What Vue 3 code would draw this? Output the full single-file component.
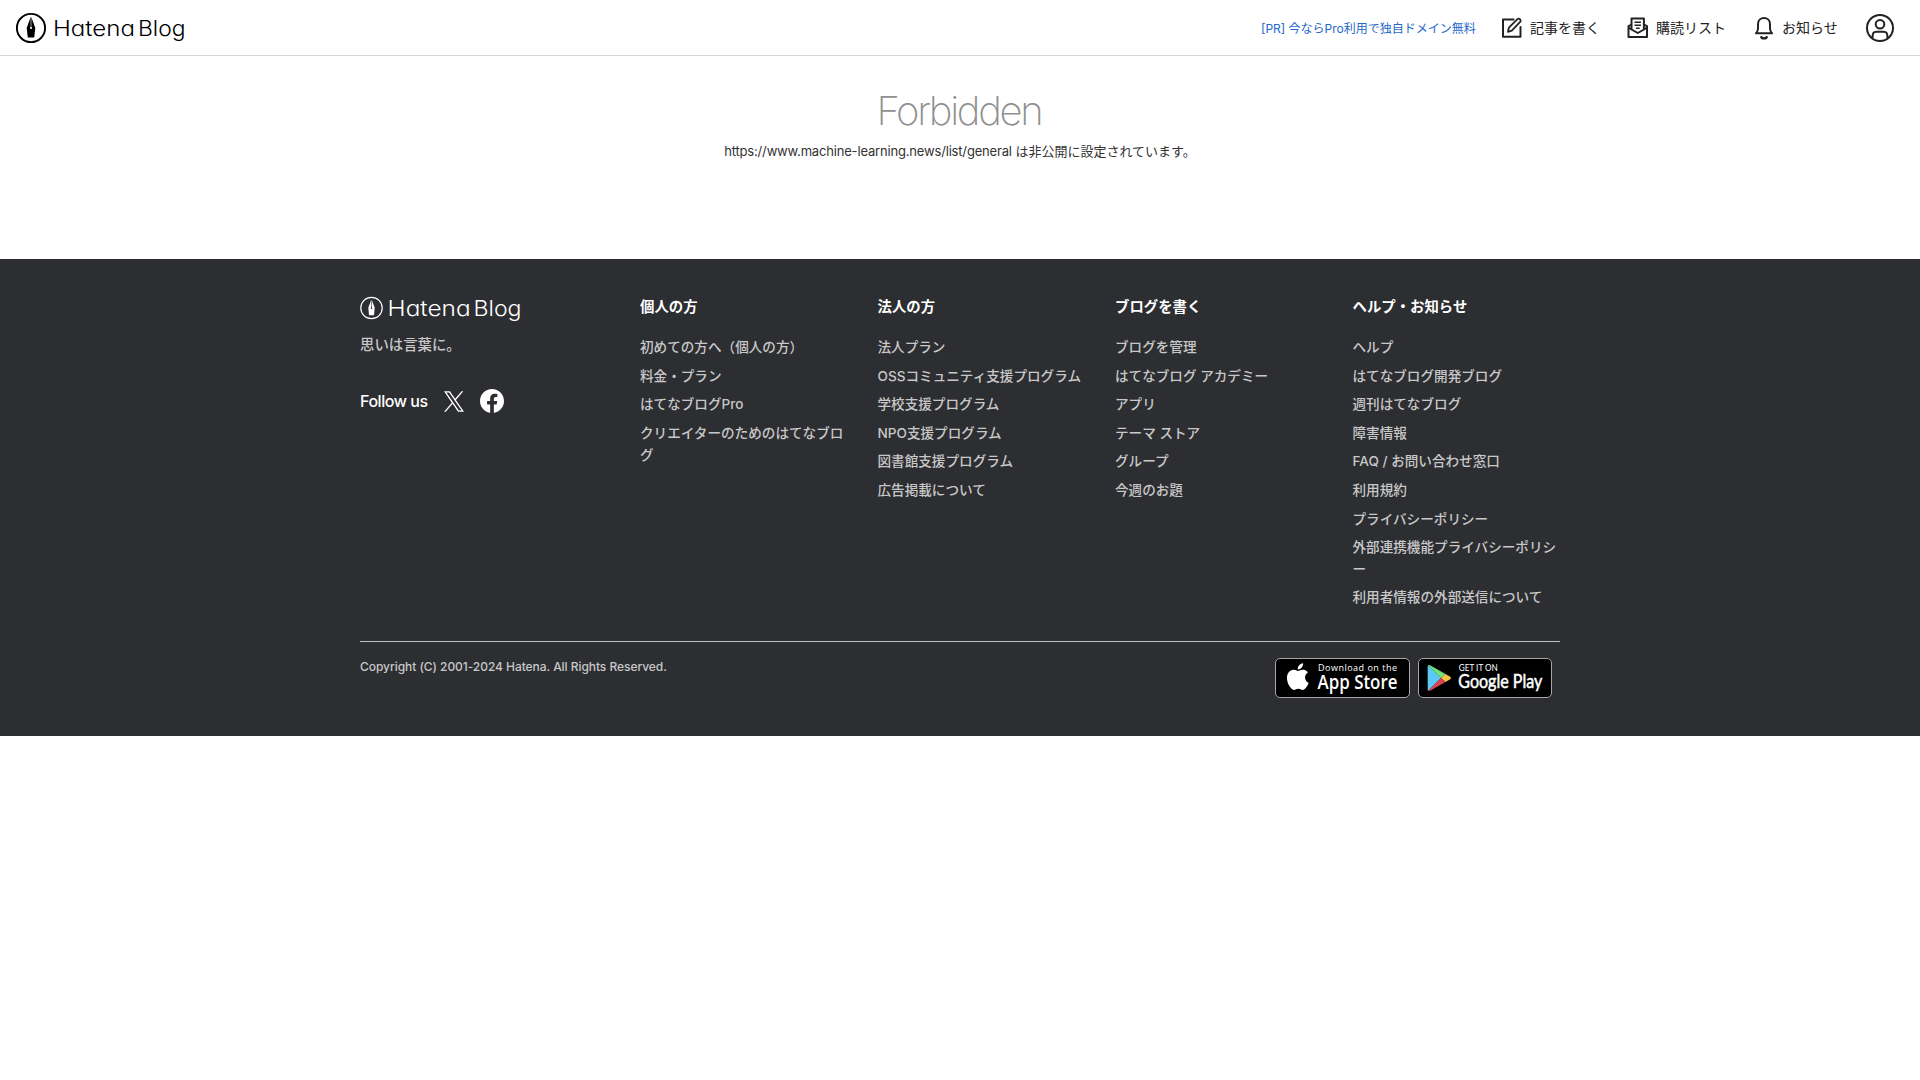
<script setup>
const columns = [
  {
    title: '個人の方',
    links: ['初めての方へ（個人の方）', '料金・プラン', 'はてなブログPro', 'クリエイターのためのはてなブログ'],
  },
  {
    title: '法人の方',
    links: [
      '法人プラン',
      'OSSコミュニティ支援プログラム',
      '学校支援プログラム',
      'NPO支援プログラム',
      '図書館支援プログラム',
      '広告掲載について',
    ],
  },
  {
    title: 'ブログを書く',
    links: ['ブログを管理', 'はてなブログ アカデミー', 'アプリ', 'テーマ ストア', 'グループ', '今週のお題'],
  },
  {
    title: 'ヘルプ・お知らせ',
    links: [
      'ヘルプ',
      'はてなブログ開発ブログ',
      '週刊はてなブログ',
      '障害情報',
      'FAQ / お問い合わせ窓口',
      '利用規約',
      'プライバシーポリシー',
      '外部連携機能プライバシーポリシー',
      '利用者情報の外部送信について',
    ],
  },
]
</script>

<template>
  <div class="page">
    <header class="header">
      <a class="brand" aria-label="Hatena Blog">
        <svg width="172" height="32" viewBox="0 0 172 32">
          <circle cx="15" cy="15" r="14.1" fill="none" stroke="#000" stroke-width="1.9" />
          <path d="M14.5 4.5h1l3.8 10.4-1.1 9.5h-6.4l-1.1-9.500z" fill="#000" />
          <path d="M15 5v9" stroke="#fff" stroke-width=".6" />
          <circle cx="15" cy="15" r="1.1" fill="#fff" />
          <text class="wordmark" x="37" y="22.500" font-size="21.500" textLength="82" lengthAdjust="spacingAndGlyphs">Hatena</text>
          <text class="wordmark" x="122" y="22.500" font-size="21.500" textLength="47.500" lengthAdjust="spacingAndGlyphs">Blog</text>
        </svg>
      </a>
      <nav class="nav">
        <a class="pr">[PR] 今ならPro利用で独自ドメイン無料</a>
        <a class="nav-item write">
          <svg width="22" height="22" viewBox="0 0 22 22" fill="none" stroke="#222" stroke-width="2" stroke-linejoin="round">
            <path d="M12.500 2.500H2v17.300h17.500V10" stroke-linecap="round" />
            <path d="M7 14.800l.9-4.200 8.800-8.700c1.600-1 3.800 1.100 2.700 2.800l-8.600 8.900z" stroke-width="1.800" />
          </svg>
          <span>記事を書く</span>
        </a>
        <a class="nav-item list">
          <svg width="22" height="22" viewBox="0 0 22 22" fill="none" stroke="#222" stroke-width="2" stroke-linejoin="round">
            <path d="M4.500 7.500L1.500 9.200V20h18.500V9.200l-3-1.700" />
            <path d="M1.500 10.500l3 2 6.300 3.500 6.200-3.500 3-2" />
            <path d="M4.500 12.500V1.500h12.400v11" />
            <path d="M7.500 5.200h6.500M7.500 8.200h6.500M9 11.200h3.700" stroke-width="1.500" />
          </svg>
          <span>購読リスト</span>
        </a>
        <a class="nav-item notice">
          <svg width="20" height="24" viewBox="0 0 20 24" fill="none" stroke="#222" stroke-width="2" stroke-linejoin="round">
            <path d="M2 17.200c1.500-1.500 2-3 2-5V8c0-8 12-8 12 0v4.200c0 2 .5 3.500 2 5z" />
            <path d="M7 20.200c.5 3 5.500 3 6 0" stroke-width="2.200" />
          </svg>
          <span>お知らせ</span>
        </a>
        <a class="account" aria-label="アカウント">
          <svg width="28" height="28" viewBox="0 0 28 28" fill="none" stroke="#222" stroke-width="2">
            <circle cx="14" cy="14" r="13" />
            <circle cx="14" cy="10.200" r="4.300" />
            <path d="M6.500 24c0-5 .8-6.300 4-6.300h7c3.200 0 4 1.300 4 6.300" />
          </svg>
        </a>
      </nav>
    </header>

    <main class="main">
      <h1>Forbidden</h1>
      <p><span class="url">https://www.machine-learning.news/list/general</span> は非公開に設定されています。</p>
    </main>

    <footer class="footer">
      <div class="inner">
        <div class="top">
          <section class="about">
            <svg class="footer-logo" width="164" height="28" viewBox="0 0 164 28">
              <circle cx="11.500" cy="12" r="10.700" fill="none" stroke="#fff" stroke-width="1.200" />
              <path d="M11.100 4.300h.8l2.800 7.500-.7 7.500H9l-.7-7.500z" fill="#fff" />
              <path d="M11.500 4.500v8" stroke="#2d2e32" stroke-width=".6" />
              <circle cx="11.500" cy="12.300" r=".8" fill="#2d2e32" />
              <text class="wordmark light" x="27.600" y="19.600" font-size="22" textLength="83" lengthAdjust="spacingAndGlyphs">Hatena</text>
              <text class="wordmark light" x="113.500" y="19.600" font-size="22" textLength="48" lengthAdjust="spacingAndGlyphs">Blog</text>
            </svg>
            <p class="tagline">思いは言葉に。</p>
            <div class="follow">
              <span>Follow us</span>
              <svg class="x" width="20" height="21" viewBox="0 0 1200 1227" fill="#fff">
                <path d="M714.163 519.284L1160.890 0H1055.030L667.137 450.887L357.328 0H0L468.492 681.821L0 1226.370H105.866L515.491 750.218L842.672 1226.370H1200L714.137 519.284H714.163ZM569.165 687.828L521.697 619.934L144.011 79.694H306.615L611.412 515.685L658.880 583.579L1055.080 1150.300H892.476L569.165 687.854V687.828Z" />
              </svg>
              <svg width="24" height="24" viewBox="0 0 24 24" fill="#fff">
                <path d="M24 12.073c0-6.627-5.373-12-12-12s-12 5.373-12 12c0 5.990 4.388 10.954 10.125 11.854v-8.385H7.078v-3.470h3.047V9.430c0-3.007 1.792-4.669 4.533-4.669 1.312 0 2.686.235 2.686.235v2.953H15.830c-1.491 0-1.956.925-1.956 1.874v2.250h3.328l-.532 3.470h-2.796v8.385C19.612 23.027 24 18.062 24 12.073z" />
              </svg>
            </div>
          </section>
          <div class="columns">
            <section v-for="col in columns" :key="col.title" class="column">
              <h2>{{ col.title }}</h2>
              <ul>
                <li v-for="link in col.links" :key="link">{{ link }}</li>
              </ul>
            </section>
          </div>
        </div>
        <div class="bottom">
          <p class="copyright">Copyright (C) 2001-2024 Hatena. All Rights Reserved.</p>
          <div class="badges">
            <svg width="135" height="40" viewBox="0 0 135 40">
              <rect x=".5" y=".5" width="134" height="39" rx="4.500" fill="#000" stroke="#a6a6a6" />
              <path transform="translate(9.500 5.300) scale(1.110)" fill="#fff" d="M12.152 6.896c-.948 0-2.415-1.078-3.960-1.040-2.040.027-3.910 1.183-4.961 3.014-2.117 3.675-.546 9.103 1.519 12.090 1.013 1.454 2.208 3.090 3.792 3.039 1.520-.065 2.090-.987 3.935-.987 1.831 0 2.350.987 3.960.948 1.637-.026 2.676-1.480 3.676-2.948 1.156-1.688 1.636-3.325 1.662-3.415-.039-.013-3.182-1.221-3.220-4.857-.026-3.040 2.480-4.494 2.597-4.559-1.429-2.090-3.623-2.324-4.390-2.376-2-.156-3.675 1.090-4.610 1.090zM15.530 3.830c.843-1.012 1.400-2.427 1.245-3.830-1.207.052-2.662.805-3.532 1.818-.780.896-1.454 2.338-1.273 3.714 1.338.104 2.715-.688 3.559-1.701" />
              <text class="apple-small" x="43" y="13" font-size="9" textLength="79" lengthAdjust="spacing">Download on the</text>
              <text class="apple-big" x="42.500" y="31.400" font-size="19" textLength="80" lengthAdjust="spacingAndGlyphs">App Store</text>
            </svg>
            <svg width="134" height="40" viewBox="0 0 134 40">
              <rect x=".5" y=".5" width="133" height="39" rx="4.500" fill="#000" stroke="#a6a6a6" />
              <path d="M10.300 7.200L23 20 10.300 32.800q-.6-.4-.6-1.400V8.600q0-1 .6-1.400z" fill="#5bc8f5" />
              <path d="M10.300 7.200q.7-.4 1.700.1L27.500 16 23 20.200z" fill="#6fe27a" />
              <path d="M27.500 16l4.700 2.800q1.600 1.200 0 2.400L27.500 24 23 20z" fill="#f6c344" />
              <path d="M10.300 32.800q.7.400 1.700-.1L27.500 24 23 19.900z" fill="#dc4550" />
              <text class="play-small" x="40.800" y="13" font-size="8.500" textLength="39" lengthAdjust="spacingAndGlyphs">GET IT ON</text>
              <text class="play-big" x="40.300" y="29.800" font-size="18.500" textLength="84" lengthAdjust="spacingAndGlyphs">Google Play</text>
            </svg>
          </div>
        </div>
      </div>
    </footer>
  </div>
</template>

<style>
body {
  margin: 0;
  background: #fff;
}
</style>

<style scoped>
.page {
  font-family: Inter, "Noto Sans CJK JP", sans-serif;
  color: #333;
}
h1, h2, p, ul {
  margin: 0;
  padding: 0;
}
svg {
  display: block;
  flex: none;
  overflow: visible;
}
.header {
  box-sizing: border-box;
  height: 56px;
  padding: 0 26px 0 16px;
  border-bottom: 1px solid #d5d5d5;
  display: flex;
  align-items: center;
  justify-content: space-between;
}
.brand {
  padding-top: 3px;
}
.wordmark {
  font-family: Inter, sans-serif;
  font-weight: 300;
  font-feature-settings: "cv11";
  fill: #000;
}
.light {
  fill: #fff;
}
.nav {
  display: flex;
  align-items: center;
  white-space: nowrap;
}
.pr {
  width: 216px;
  padding-top: 2px;
  margin-right: 24px;
  font-size: 12px;
  line-height: 20px;
  color: #2468cc;
}
.nav-item {
  display: flex;
  align-items: center;
  font-size: 14px;
  line-height: 22px;
  color: #222;
}
.write {
  width: 101px;
  gap: 7px;
  margin-right: 25px;
}
.list {
  width: 101px;
  gap: 7px;
  margin-right: 26px;
}
.notice {
  width: 84px;
  gap: 8px;
  margin-right: 28px;
}
.main {
  box-sizing: border-box;
  height: 203px;
  padding-top: 30px;
  text-align: center;
}
.main h1 {
  font-size: 40px;
  line-height: 50px;
  font-weight: 200;
  letter-spacing: -2.300px;
  text-indent: -2px;
  color: #909090;
}
.main p {
  margin-top: 5px;
  font-size: 13px;
  line-height: 20px;
}
.url {
  letter-spacing: -.175px;
}
.footer {
  box-sizing: border-box;
  height: 477px;
  padding-top: 37px;
  background: #2d2e32;
  color: #c8c8c8;
}
.inner {
  width: 1200px;
  margin: 0 auto;
}
.top {
  display: flex;
  height: 345px;
  border-bottom: 1px solid #bfc0c2;
}
.about {
  width: 280px;
}
.tagline {
  margin-top: 9px;
  font-size: 14.400px;
  line-height: 23px;
  font-weight: 500;
}
.follow {
  display: flex;
  align-items: center;
  margin-top: 32px;
  font-size: 16px;
  line-height: 26px;
  font-weight: 500;
  color: #fff;
}
.follow span {
  width: 84px;
  white-space: nowrap;
  letter-spacing: -.450px;
}
.follow .x {
  margin-right: 16px;
}
.columns {
  display: grid;
  grid-template-columns: repeat(4, 207.500px);
  column-gap: 30px;
}
.column h2 {
  margin-top: -1.500px;
  font-size: 14.400px;
  line-height: 23px;
  font-weight: 700;
  color: #fff;
}
.column ul {
  margin-top: 19.700px;
  list-style: none;
}
.column li {
  margin-bottom: 6.800px;
  font-size: 13.600px;
  line-height: 21.760px;
  font-weight: 500;
  word-break: break-all;
}
.bottom {
  display: flex;
  justify-content: space-between;
  padding: 16px 8px 0 0;
}
.copyright {
  font-size: 12px;
  line-height: 18px;
  font-weight: 500;
  letter-spacing: -.050px;
}
.badges {
  display: flex;
  gap: 8px;
}
.apple-small, .apple-big {
  font-family: "Open Sans", sans-serif;
  font-weight: 600;
  fill: #fff;
}
.apple-small {
  font-weight: 500;
}
.play-small, .play-big {
  font-family: Lato, sans-serif;
  font-weight: 400;
  fill: #fff;
}
.play-big {
  stroke: #fff;
  stroke-width: .5px;
}
</style>
